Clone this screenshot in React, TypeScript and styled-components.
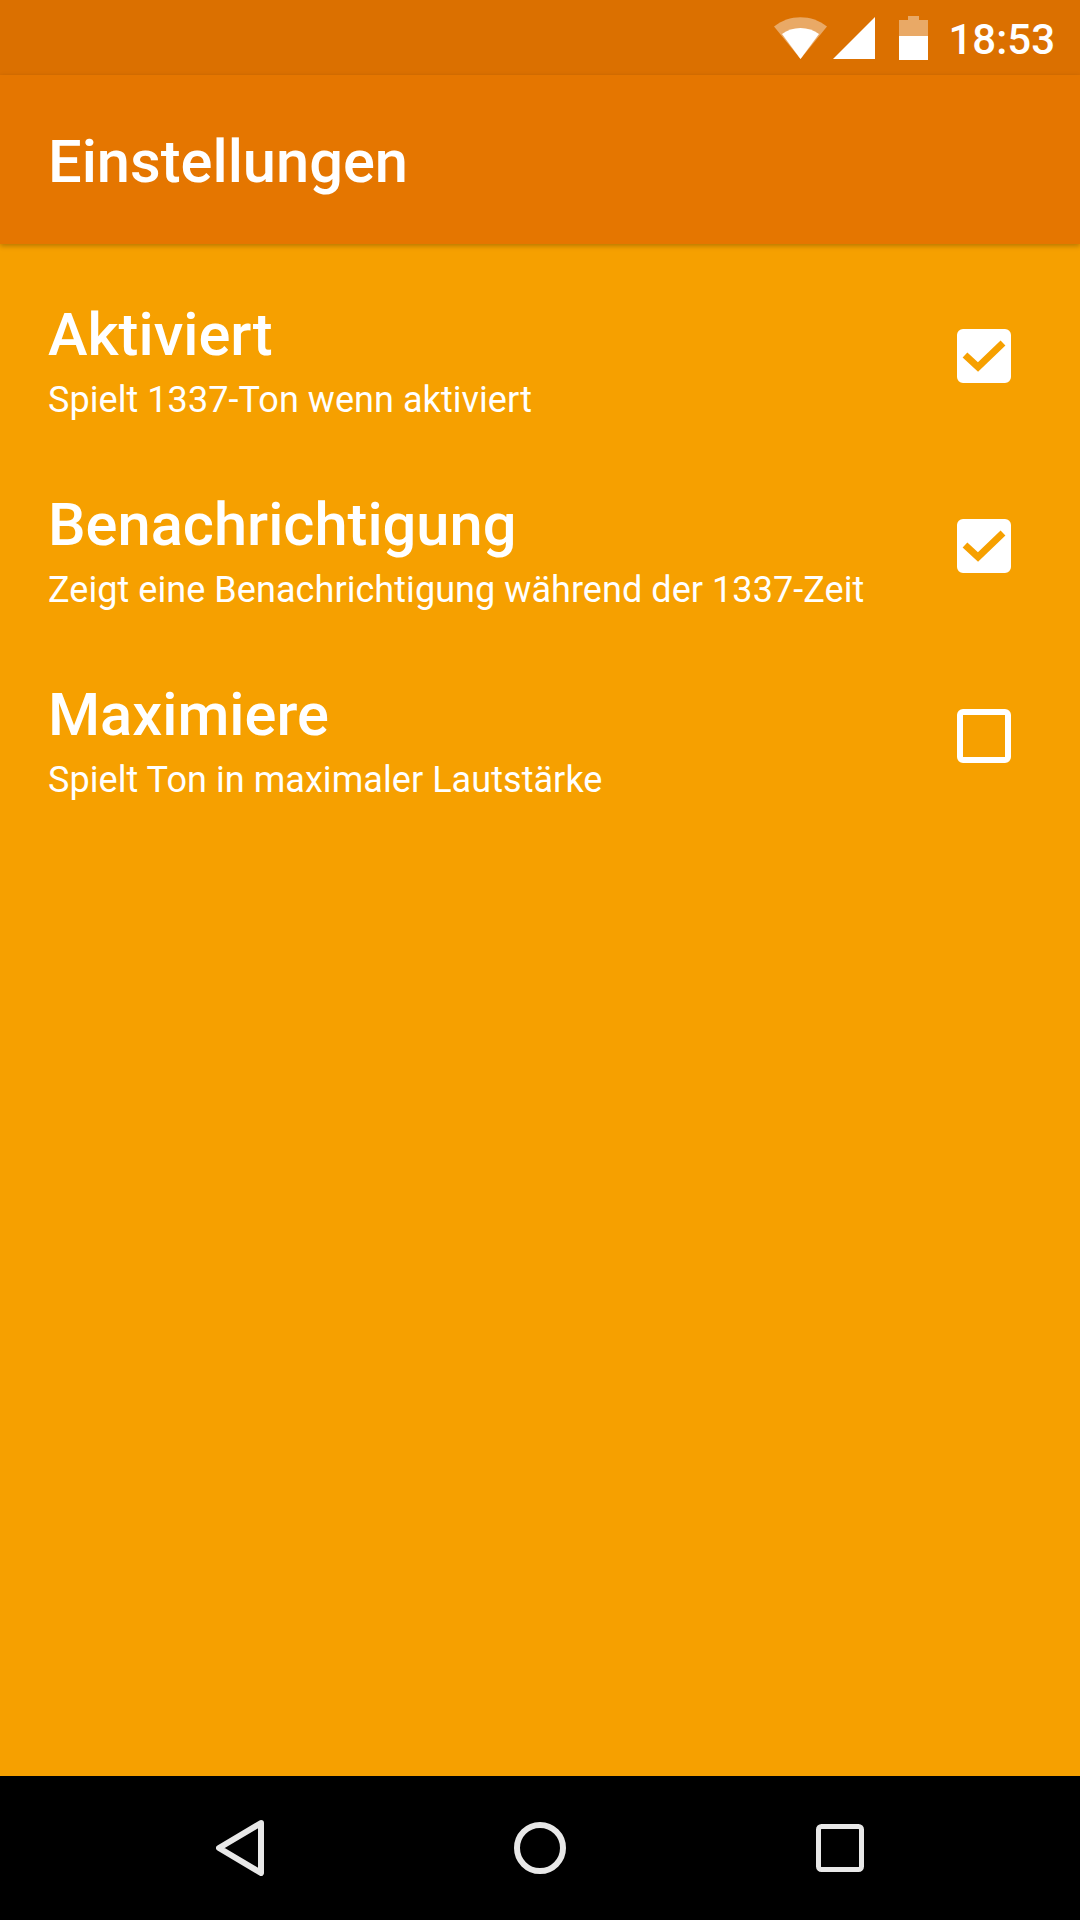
import React from "react";
import styled, { createGlobalStyle } from "styled-components";

const GlobalStyle = createGlobalStyle`
  html, body {
    margin: 0;
    padding: 0;
    background: #f6a000;
  }
  body {
    font-family: Roboto, "Noto Sans", sans-serif;
  }
`;

const Screen = styled.div`
  width: 1080px;
  height: 1920px;
  display: flex;
  flex-direction: column;
  overflow: hidden;
  color: #fff;
`;

const StatusBar = styled.div`
  height: 75px;
  flex: none;
  background: #db7000;
  display: flex;
  align-items: center;
  justify-content: flex-end;
  padding-right: 25px;
`;

const StatusIcon = styled.svg<{ $gap: number }>`
  display: block;
  flex: none;
  margin-right: ${({ $gap }) => $gap}px;
`;

const Clock = styled.span`
  font-size: 42px;
  font-weight: 500;
  line-height: 75px;
  padding-top: 4px;
`;

const Toolbar = styled.header`
  height: 169px;
  flex: none;
  box-sizing: border-box;
  background: #e57600;
  display: flex;
  align-items: center;
  padding: 4px 0 0 48px;
  box-shadow: 0 2px 5px rgba(0, 0, 0, 0.25);
  position: relative;
`;

const Title = styled.h1`
  margin: 0;
  font-size: 59.6px;
  font-weight: 500;
`;

const Content = styled.main`
  flex: 1;
  background: #f6a000;
  padding-top: 17px;
`;

const Row = styled.div`
  height: 190px;
  display: flex;
  align-items: center;
  justify-content: space-between;
  padding: 0 69px 0 48px;
`;

const RowText = styled.div`
  display: flex;
  flex-direction: column;
  padding-top: 9px;
`;

const RowTitle = styled.div`
  font-size: 59.6px;
  font-weight: 500;
  line-height: 76px;
`;

const RowSummary = styled.div`
  font-size: 36px;
  line-height: 48px;
  letter-spacing: 0.06px;
  margin-top: 3px;
`;

const Box = styled.div<{ $checked: boolean }>`
  width: 54px;
  height: 54px;
  box-sizing: border-box;
  flex: none;
  border-radius: 6px;
  border: 6.5px solid #fff;
  background: ${({ $checked }) => ($checked ? "#fff" : "transparent")};
  position: relative;
`;

const Tick = styled.svg`
  position: absolute;
  left: -6px;
  top: -6px;
`;

const NavBar = styled.nav`
  height: 144px;
  flex: none;
  background: #000;
  padding: 0 90px;
  display: grid;
  grid-template-columns: repeat(3, 300px);
  align-items: center;
  justify-items: center;
`;

const settings = [
  { title: "Aktiviert", summary: "Spielt 1337-Ton wenn aktiviert", checked: true },
  {
    title: "Benachrichtigung",
    summary: "Zeigt eine Benachrichtigung während der 1337-Zeit",
    checked: true,
  },
  { title: "Maximiere", summary: "Spielt Ton in maximaler Lautstärke", checked: false },
];

function Checkbox({ checked }: { checked: boolean }) {
  return (
    <Box $checked={checked}>
      {checked && (
        <Tick width="54" height="54" viewBox="0 0 54 54">
          <path d="M8 26 L21 38 L46 14" fill="none" stroke="#f6a000" strokeWidth="7" />
        </Tick>
      )}
    </Box>
  );
}

export default function App() {
  return (
    <>
      <GlobalStyle />
      <Screen>
        <StatusBar>
          <StatusIcon $gap={6} width="53" height="42" viewBox="0 0 53 42">
            <path d="M0 9.5 C15 -3 38 -3 53 9.5 L26.5 42 Z" fill="#fff" fillOpacity="0.4" />
            <path d="M8 17 C18 9 35 9 45 17 L26.5 42 Z" fill="#fff" />
          </StatusIcon>
          <StatusIcon $gap={24} width="42" height="42" viewBox="0 0 42 42">
            <path d="M0 42 L42 0 L42 42 Z" fill="#fff" />
          </StatusIcon>
          <StatusIcon $gap={20} width="29" height="44" viewBox="0 0 29 44">
            <path d="M9 0 H20 V4 H29 V20 H0 V4 H9 Z" fill="#fff" fillOpacity="0.4" />
            <path d="M0 20 H29 V44 H0 Z" fill="#fff" />
          </StatusIcon>
          <Clock>18:53</Clock>
        </StatusBar>
        <Toolbar>
          <Title>Einstellungen</Title>
        </Toolbar>
        <Content>
          {settings.map((item) => (
            <Row key={item.title}>
              <RowText>
                <RowTitle>{item.title}</RowTitle>
                <RowSummary>{item.summary}</RowSummary>
              </RowText>
              <Checkbox checked={item.checked} />
            </Row>
          ))}
        </Content>
        <NavBar>
          <svg width="48" height="56" viewBox="0 0 48 56">
            <path
              d="M45 3 L3 28 L45 53 Z"
              fill="none"
              stroke="#e8e8e8"
              strokeWidth="6"
              strokeLinejoin="round"
            />
          </svg>
          <svg width="52" height="52" viewBox="0 0 52 52">
            <circle cx="26" cy="26" r="23" fill="none" stroke="#e8e8e8" strokeWidth="6" />
          </svg>
          <svg width="48" height="48" viewBox="0 0 48 48">
            <rect
              x="2.5"
              y="2.5"
              width="43"
              height="43"
              rx="3"
              fill="none"
              stroke="#e8e8e8"
              strokeWidth="5"
            />
          </svg>
        </NavBar>
      </Screen>
    </>
  );
}
